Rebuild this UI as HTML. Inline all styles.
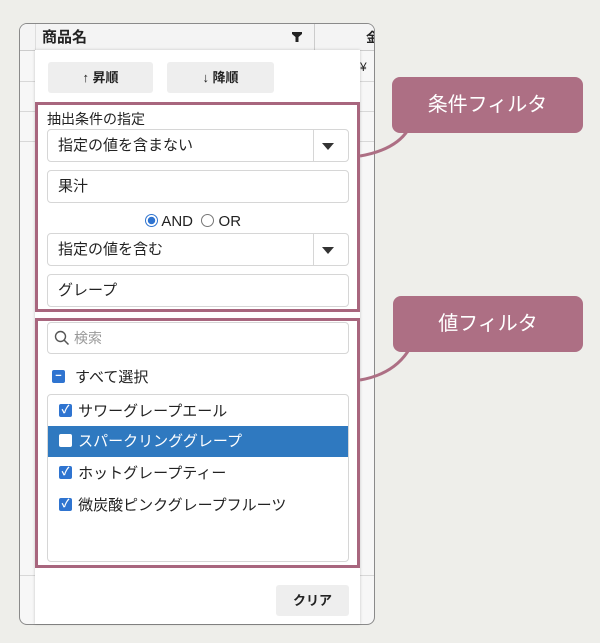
<!DOCTYPE html>
<html><head><meta charset="utf-8"><style>
*{box-sizing:border-box;margin:0;padding:0}
body{width:600px;height:643px;background:#eeeeea;font-family:"Liberation Sans","Noto Sans CJK JP",sans-serif;position:relative;overflow:hidden;color:#222}
.a{position:absolute}
.card{left:19px;top:23px;width:356px;height:602px;background:#f7f7f7;border:1.5px solid #8a8a8a;border-radius:8px;overflow:hidden}
.hl{background:#d8d8d8;height:1px}
.pop{left:35px;top:50px;width:325px;height:574px;background:#fff;box-shadow:0 0 3px rgba(0,0,0,.2)}
.btn{background:#eeeeee;border-radius:3px;font-size:13px;font-weight:bold;text-align:center;line-height:31px}
.box{border:3px solid #a8667e}
.fld{background:#fff;border:1px solid #d6d6d6;border-radius:4px;font-size:15px;padding-left:10px}
.cb{width:13px;height:13px;border-radius:2px;background:#2f74d0;color:#fff;font-size:11px;line-height:13px;text-align:center;font-weight:bold}
.it{font-size:15px;height:31px;line-height:31px}
.it .cb{display:inline-block;vertical-align:middle;position:relative;top:-2px;margin-right:2px}
.call{background:#ad6f84;color:#fff;border-radius:8px;font-size:20px;text-align:center;line-height:56px}
.tri{position:absolute;left:274px;top:13px;width:0;height:0;border-left:6px solid transparent;border-right:6px solid transparent;border-top:7px solid #333}
</style></head><body>
<div class="a card">
 <div class="a" style="left:0;top:0;width:356px;height:27px;background:#f4f4f4;border-bottom:1px solid #ccc"></div>
 <div class="a" style="left:15px;top:0;width:1px;height:600px;background:#ddd"></div>
 <div class="a" style="left:294px;top:0;width:1px;height:27px;background:#ccc"></div>
 <div class="a" style="left:22px;top:2px;font-size:15px;font-weight:bold">商品名</div>
 <svg class="a" style="left:272px;top:8px" width="10" height="10" viewBox="0 0 10 10"><path d="M0 0H10V2L6.5 5V10H3.5V5L0 2Z" fill="#222"/></svg>
 <div class="a" style="left:346px;top:3px;font-size:13px;font-weight:bold">金</div>
 <div class="a" style="left:340px;top:36px;font-size:12px">¥</div>
 <div class="a hl" style="left:0;top:57px;width:356px"></div>
 <div class="a hl" style="left:0;top:87px;width:356px"></div>
 <div class="a hl" style="left:0;top:117px;width:356px"></div>
 <div class="a hl" style="left:0;top:551px;width:356px"></div>
</div>
<div class="a pop"></div>
<div class="a btn" style="left:48px;top:62px;width:105px">↑ 昇順</div>
<div class="a btn" style="left:167px;top:62px;width:107px">↓ 降順</div>
<div class="a box" style="left:35px;top:102px;width:325px;height:210px"></div>
<div class="a" style="left:47px;top:109px;font-size:14px">抽出条件の指定</div>
<div class="a fld" style="left:47px;top:129px;width:302px;height:33px;line-height:31px">指定の値を含まない<span class="a" style="left:265px;top:0;width:1px;height:31px;background:#d6d6d6"></span><span class="tri"></span></div>
<div class="a fld" style="left:47px;top:170px;width:302px;height:33px;line-height:31px">果汁</div>
<div class="a" style="left:145px;top:213px;font-size:15px;line-height:18px"><span style="display:inline-block;width:13px;height:13px;border-radius:50%;border:1px solid #2f74d0;vertical-align:-1px;background:radial-gradient(#2f74d0 45%,#fff 50%)"></span> AND &nbsp;<span style="display:inline-block;width:13px;height:13px;border-radius:50%;border:1px solid #777;vertical-align:-1px"></span> OR</div>
<div class="a fld" style="left:47px;top:233px;width:302px;height:33px;line-height:31px">指定の値を含む<span class="a" style="left:265px;top:0;width:1px;height:31px;background:#d6d6d6"></span><span class="tri"></span></div>
<div class="a fld" style="left:47px;top:274px;width:302px;height:33px;line-height:31px">グレープ</div>
<div class="a box" style="left:35px;top:318px;width:325px;height:250px"></div>
<div class="a fld" style="left:47px;top:322px;width:302px;height:32px;line-height:30px;color:#999;padding-left:26px;font-size:14px">検索<svg class="a" style="left:6px;top:7px" width="16" height="16" viewBox="0 0 16 16"><circle cx="6.5" cy="6.5" r="5" fill="none" stroke="#555" stroke-width="1.4"/><path d="M10 10l4.5 4.5" stroke="#555" stroke-width="1.5"/></svg></div>
<div class="a cb" style="left:52px;top:370px">−</div>
<div class="a" style="left:75px;top:366px;font-size:15px">すべて選択</div>
<div class="a" style="left:47px;top:394px;width:302px;height:168px;border:1px solid #d6d6d6;border-radius:4px;background:#fff"></div>
<div class="a it" style="left:59px;top:396px"><span class="cb">✓</span> サワーグレープエール</div>
<div class="a it" style="left:48px;top:426px;width:300px;background:#2f79c0;color:#fff;padding-left:11px"><span style="display:inline-block;width:13px;height:13px;background:#fff;border-radius:2px;vertical-align:middle;position:relative;top:-2px;margin-right:2px"></span> スパークリンググレープ</div>
<div class="a it" style="left:59px;top:458px"><span class="cb">✓</span> ホットグレープティー</div>
<div class="a it" style="left:59px;top:490px"><span class="cb">✓</span> 微炭酸ピンクグレープフルーツ</div>
<div class="a btn" style="left:276px;top:585px;width:73px;height:31px">クリア</div>
<svg class="a" style="left:0;top:0" width="600" height="643"><path d="M360 156 Q395 150 408 130" fill="none" stroke="#ad6f84" stroke-width="3"/><path d="M360 380 Q395 374 410 348" fill="none" stroke="#ad6f84" stroke-width="3"/></svg>
<div class="a call" style="left:392px;top:77px;width:191px;height:56px">条件フィルタ</div>
<div class="a call" style="left:393px;top:296px;width:190px;height:56px">値フィルタ</div>
</body></html>
